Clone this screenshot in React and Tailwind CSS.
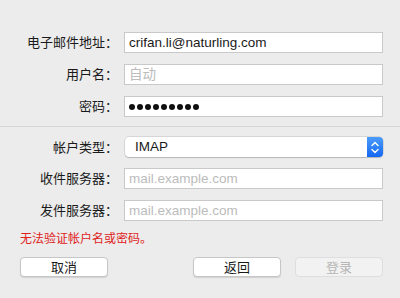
import React from "react";

const font = { fontFamily: '"Liberation Sans", "Noto Sans CJK SC", sans-serif' };

function Label({ children }) {
  return (
    <div className="w-[118px] shrink-0 text-right text-[13px] leading-none text-[#1a1a1a]">
      {children}
    </div>
  );
}

function Field({ label, children }) {
  return (
    <div className="flex h-[21px] items-center gap-[6px]">
      <Label>{label}</Label>
      <div className="flex h-full flex-1 items-center border border-[#c9c9c9] bg-white px-[4px] text-[13.5px] leading-none">
        {children}
      </div>
    </div>
  );
}

function Btn({ children, disabled }) {
  return (
    <div
      className={`flex h-[20px] w-[88px] items-center justify-center rounded-[4px] border text-[13px] leading-none ${
        disabled
          ? "border-[#dedede] bg-[#f2f2f2] text-[#b5b5b5]"
          : "border-[#c6c6c6] bg-white text-[#1a1a1a] shadow-[0_1px_1px_rgba(0,0,0,0.12)]"
      }`}
    >
      {children}
    </div>
  );
}

export default function App() {
  return (
    <div className="h-[298px] w-[400px] overflow-hidden bg-[#ececec]" style={font}>
      <div className="flex flex-col gap-[11px] pr-[17px] pt-[32px]">
        <Field label="电子邮件地址：">
          <span className="text-[#1a1a1a]">crifan.li@naturling.com</span>
        </Field>
        <Field label="用户名：">
          <span className="text-[#bcbcbc]">自动</span>
        </Field>
        <Field label="密码：">
          <div className="flex gap-[2px]">
            {Array.from({ length: 9 }).map((_, i) => (
              <span key={i} className="h-[6px] w-[6px] rounded-full bg-[#111]" />
            ))}
          </div>
        </Field>
      </div>

      <div className="mt-[9px] h-px bg-[#d6d6d6]" />

      <div className="flex flex-col gap-[11px] pr-[17px] pt-[10px]">
        <div className="flex h-[20px] items-center gap-[7px]">
          <Label>帐户类型：</Label>
          <div className="flex h-full flex-1 items-stretch rounded-[4px] bg-white shadow-[0_0_0_0.5px_rgba(0,0,0,0.18),0_1px_1px_rgba(0,0,0,0.15)]">
            <div className="flex flex-1 items-center pl-[10px] text-[13.5px] leading-none text-[#1a1a1a]">IMAP</div>
            <div className="flex w-[16px] items-center justify-center rounded-r-[4px] bg-gradient-to-b from-[#4b9bfb] to-[#1467f2]">
              <svg width="8" height="13" viewBox="0 0 8 13" fill="none" stroke="white" strokeWidth="1.4" strokeLinecap="round" strokeLinejoin="round">
                <path d="M1 4.5 L4 1.5 L7 4.5" />
                <path d="M1 8.5 L4 11.5 L7 8.5" />
              </svg>
            </div>
          </div>
        </div>
        <Field label="收件服务器：">
          <span className="text-[#bcbcbc]">mail.example.com</span>
        </Field>
        <Field label="发件服务器：">
          <span className="text-[#bcbcbc]">mail.example.com</span>
        </Field>
      </div>

      <div className="mt-[10px] pl-[20px] text-[12px] leading-[16px] text-[#e0221b]">
        无法验证帐户名或密码。
      </div>

      <div className="mt-[10px] flex items-center pl-[20px] pr-[17px]">
        <Btn>取消</Btn>
        <div className="flex-1" />
        <div className="flex gap-[14px]">
          <Btn>返回</Btn>
          <Btn disabled>登录</Btn>
        </div>
      </div>
    </div>
  );
}
